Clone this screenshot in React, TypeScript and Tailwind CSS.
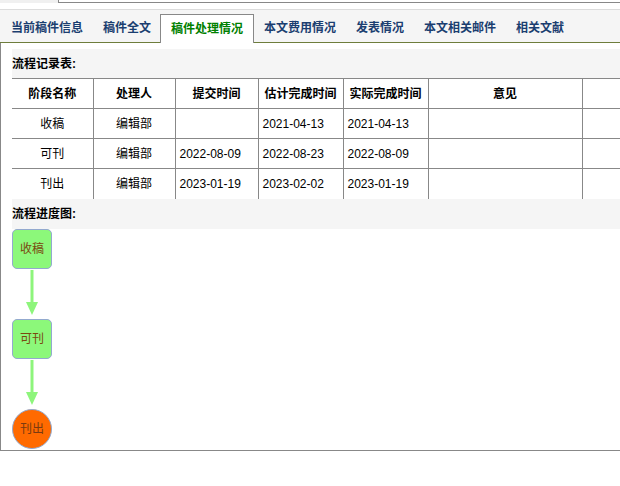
const tabs = ['当前稿件信息', '稿件全文', '稿件处理情况', '本文费用情况', '发表情况', '本文相关邮件', '相关文献']

const rows = [
  { stage: '收稿', who: '编辑部', submit: '', plan: '2021-04-13', actual: '2021-04-13' },
  { stage: '可刊', who: '编辑部', submit: '2022-08-09', plan: '2022-08-23', actual: '2022-08-09' },
  { stage: '刊出', who: '编辑部', submit: '2023-01-19', plan: '2023-02-02', actual: '2023-01-19' },
]

const heads = ['阶段名称', '处理人', '提交时间', '估计完成时间', '实际完成时间', '意见', '']
const widths = ['w-[81px]', 'w-[82px]', 'w-[83px]', 'w-[85px]', 'w-[85px]', 'w-[154px]', 'w-[120px]']

function Arrow() {
  return (
    <svg width="40" height="50" viewBox="0 0 40 50" className="block">
      <line x1="20" y1="1" x2="20" y2="34" stroke="#8ef57c" strokeWidth="3" />
      <polygon points="14,33 26,33 20,46" fill="#8ef57c" />
    </svg>
  )
}

export default function App() {
  const cell = 'h-[30px] border-t border-r border-[#888] text-[12px] p-0'
  return (
    <div className="w-[620px] h-[486px] bg-white overflow-hidden text-black font-['Liberation_Sans','Noto_Sans_CJK_SC',sans-serif]">
      <div className="flex h-[3px]">
        <div className="w-[59px] bg-[#f0f0f0] border-r border-[#888]" />
        <div className="flex-1 border-b border-[#888]" />
      </div>
      <div className="h-[6px]" />
      <div className="h-[34px] bg-[#f5f5f5] border-t border-[#dcdcdc] border-b border-b-[#6e7d3c] flex items-end pl-[1px]">
        {tabs.map((t, i) =>
          i === 2 ? (
            <div
              key={t}
              className="h-[29px] -mb-[1px] -ml-[1px] px-[10px] bg-white border border-b-0 border-[#888] flex items-center text-[12px] font-bold text-[#008000]"
            >
              {t}
            </div>
          ) : (
            <div key={t} className="h-[28px] px-[10px] flex items-center text-[12px] font-bold text-[#1b3e70]">
              {t}
            </div>
          )
        )}
      </div>
      <div className="h-[408px] border-l border-b border-[#888] pl-[11px] pt-[6px] overflow-hidden">
        <div className="h-[29px] bg-[#f5f5f5] flex items-center text-[12px] font-bold">流程记录表:</div>
        <table className="table-fixed border-collapse w-[690px]">
          <thead>
            <tr>
              {heads.map((h, i) => (
                <th key={i} className={`${cell} ${widths[i]} font-bold text-center`}>
                  {h}
                </th>
              ))}
            </tr>
          </thead>
          <tbody>
            {rows.map((r) => (
              <tr key={r.stage}>
                <td className={`${cell} text-center`}>{r.stage}</td>
                <td className={`${cell} text-center`}>{r.who}</td>
                <td className={`${cell} pl-[4px]`}>{r.submit}</td>
                <td className={`${cell} pl-[4px]`}>{r.plan}</td>
                <td className={`${cell} pl-[4px]`}>{r.actual}</td>
                <td className={cell}></td>
                <td className={cell}></td>
              </tr>
            ))}
          </tbody>
        </table>
        <div className="h-[30px] bg-[#f5f5f5] flex items-center text-[12px] font-bold">流程进度图:</div>
        <div className="flex flex-col items-start">
          <div className="w-[40px] h-[40px] rounded-[5px] bg-[#8cf87a] border border-[#93a9cf] flex items-center justify-center text-[12px] text-[#7a4a10]">
            收稿
          </div>
          <Arrow />
          <div className="w-[40px] h-[40px] rounded-[5px] bg-[#8cf87a] border border-[#93a9cf] flex items-center justify-center text-[12px] text-[#7a4a10]">
            可刊
          </div>
          <Arrow />
          <div className="w-[40px] h-[40px] rounded-full bg-[#ff6a00] border border-[#93a9cf] flex items-center justify-center text-[12px] text-[#7a3a10]">
            刊出
          </div>
        </div>
      </div>
    </div>
  )
}
